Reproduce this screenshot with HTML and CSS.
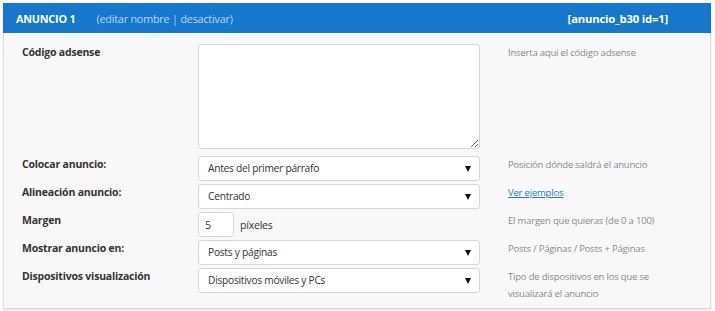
FILE: index.html
```html
<!DOCTYPE html>
<html lang="es">
    <head>
        <meta charset="UTF-8" />
        <meta name="viewport" content="width=device-width, initial-scale=1.0" />
        <title>Anuncio 1</title>
        <link rel="stylesheet" href="styles.css">
    </head>
    <body>
        <div class="panel">
            <div class="panel-head">
                <strong class="title">ANUNCIO 1</strong>
                <span class="actions">(editar nombre | desactivar)</span>
                <strong class="shortcode">[anuncio_b30 id=1]</strong>
            </div>
            <div class="panel-body">
                <label class="label">Código adsense</label>
                <div class="control control-code">
                    <textarea class="code"></textarea>
                </div>
                <div class="hint">Inserta aquí el código adsense</div>

                <label class="label">Colocar anuncio:</label>
                <div class="control">
                    <span class="select">Antes del primer párrafo</span>
                </div>
                <div class="hint">Posición dónde saldrá el anuncio</div>

                <label class="label">Alineación anuncio:</label>
                <div class="control">
                    <span class="select">Centrado</span>
                </div>
                <div class="hint"><a href="#">Ver ejemplos</a></div>

                <label class="label">Margen</label>
                <div class="control control-inline">
                    <input class="number" type="text" value="5">
                    <span>píxeles</span>
                </div>
                <div class="hint">El margen que quieras (de 0 a 100)</div>

                <label class="label">Mostrar anuncio en:</label>
                <div class="control">
                    <span class="select">Posts y páginas</span>
                </div>
                <div class="hint">Posts / Páginas / Posts + Páginas</div>

                <label class="label">Dispositivos visualización</label>
                <div class="control">
                    <span class="select">Dispositivos móviles y PCs</span>
                </div>
                <div class="hint">Tipo de dispositivos en los que se<br>visualizará el anuncio</div>
            </div>
        </div>
    </body>
</html>
```

FILE: styles.css
```css
body {
    font-family: "Open Sans", "Noto Sans", sans-serif;
    font-size: 10.5px;
    letter-spacing: -0.2px;
    color: #333;
    margin: 0;
    background: #fff;
}
.panel {
    margin: 3px 4px 4px 3px;
    border: 1px solid #dcdcdc;
    background: #f8f8f8;
    box-shadow: 0 1px 2px rgba(0, 0, 0, 0.12);
}
.panel-head {
    display: flex;
    align-items: center;
    height: 30px;
    padding: 0 43px 0 13px;
    margin: -1px -1px 0 -1px;
    background: #1677cc;
    color: #fff;
    font-size: 10.8px;
}
.actions {
    margin-left: 21px;
    color: #b9d7f3;
}
.shortcode {
    margin-left: auto;
    font-size: 11.3px;
}
.panel-body {
    display: grid;
    grid-template-columns: 176px 282px 1fr;
    row-gap: 3px;
    padding: 11px 18px 6px 18px;
}
.label {
    font-weight: bold;
    line-height: 17px;
}
.control-code {
    margin-bottom: 4px;
}
.code {
    display: block;
    box-sizing: border-box;
    width: 282px;
    height: 105px;
    margin: 0;
    border: 1px solid #d6d6d6;
    border-radius: 3px;
    background: #fff;
}
.select {
    position: relative;
    display: block;
    box-sizing: border-box;
    height: 25px;
    line-height: 23px;
    padding: 0 9px;
    border: 1px solid #d6d6d6;
    border-radius: 3px;
    background: #fff;
    font-size: 10.2px;
    letter-spacing: -0.25px;
}
.select::after {
    content: "";
    position: absolute;
    right: 8px;
    top: 9px;
    border-left: 3px solid transparent;
    border-right: 3px solid transparent;
    border-top: 6px solid #111;
}
.control-inline {
    display: flex;
    align-items: center;
    gap: 6px;
    font-size: 10.5px;
}
.number {
    box-sizing: border-box;
    width: 36px;
    height: 25px;
    margin: 0;
    padding: 0 6px;
    border: 1px solid #d6d6d6;
    border-radius: 3px;
    font: inherit;
    color: #333;
}
.hint {
    padding-left: 28px;
    font-size: 9.5px;
    line-height: 17px;
    color: #888;
}
.hint a {
    color: #2a7ab3;
}
```
